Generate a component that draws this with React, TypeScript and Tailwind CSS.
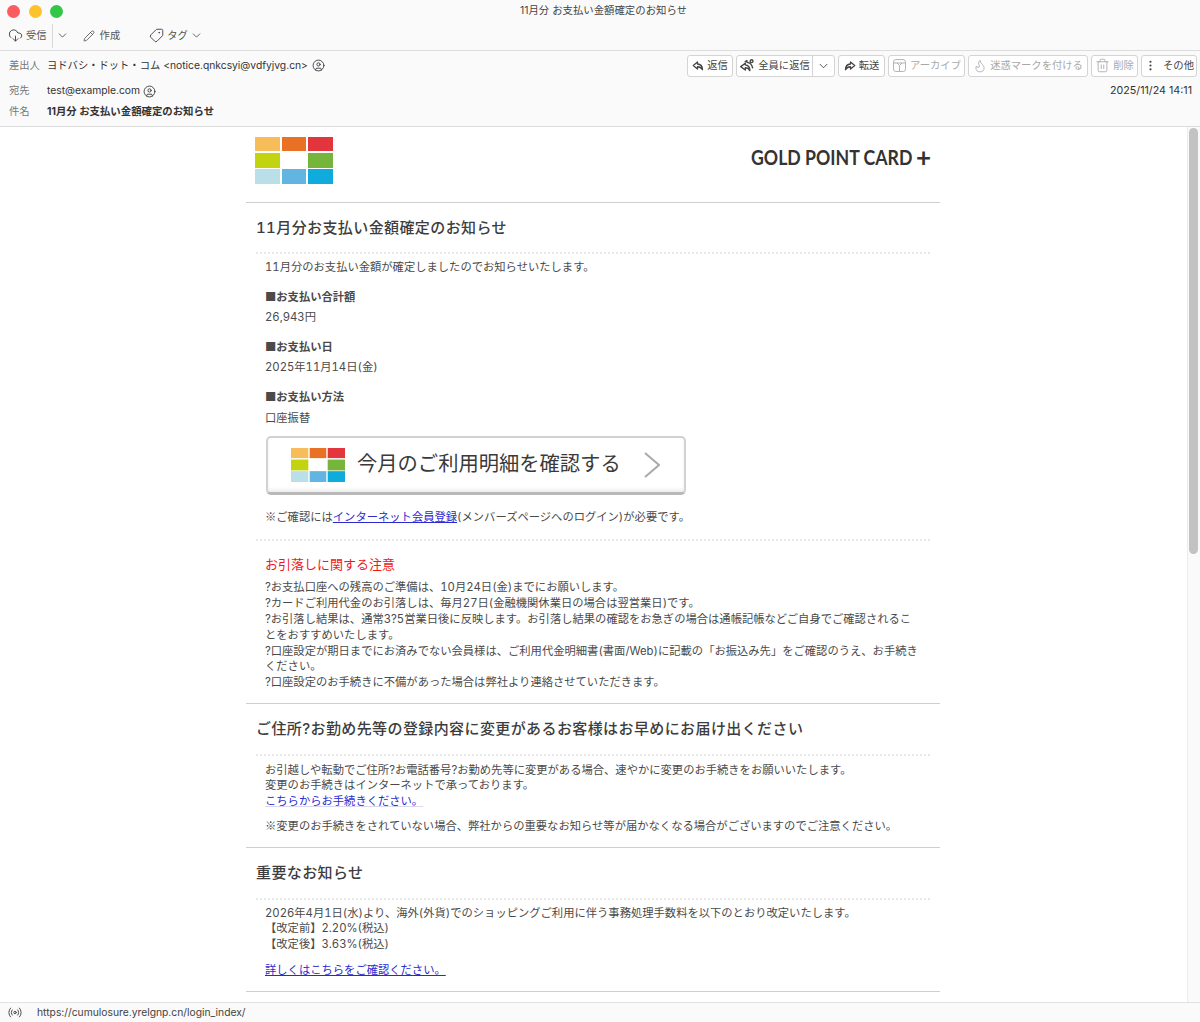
import { ReactNode } from 'react';
import {
  ChevronDown,
  CircleUser,
  CloudDownload,
  EllipsisVertical,
  Flame,
  Pencil,
  Radio,
  Tag,
  Trash2,
} from 'lucide-react';

const Logo = ({ className }: { className: string }) => (
  <svg viewBox="0 0 78 47" className={className} preserveAspectRatio="none">
    <rect x="0" y="0" width="25" height="14" fill="#f7bd5a" />
    <rect x="27" y="0" width="24" height="14" fill="#e97125" />
    <rect x="53" y="0" width="25" height="14" fill="#e2363c" />
    <rect x="0" y="16" width="25" height="15" fill="#c2d30f" />
    <rect x="53" y="16" width="25" height="15" fill="#75b53c" />
    <rect x="0" y="32" width="25" height="15" fill="#badfe8" />
    <rect x="27" y="32" width="24" height="15" fill="#62b5e0" />
    <rect x="53" y="32" width="25" height="15" fill="#0fabdc" />
  </svg>
);

const ArchiveBox = () => (
  <svg viewBox="0 0 24 24" className="w-[15px] h-[15px]" fill="none" stroke="currentColor" strokeWidth="1.4">
    <rect x="2.5" y="2.5" width="19" height="19" rx="3.5" />
    <path d="M2.5 8h19M8 8l4 4 4-4M12 12v9.5" />
  </svg>
);

// outlined arrow used by reply and forward
const ReplyArrow = ({ className = '' }: { className?: string }) => (
  <svg viewBox="0 0 24 24" className={`w-[12px] h-[12px] ${className}`} fill="none" stroke="currentColor" strokeWidth="2.6" strokeLinejoin="round">
    <path d="M11 4L2.5 11 11 18v-4.5c4.500 0 7.500 1.500 10 6 0-7-3.500-11-10-11.500z" />
  </svg>
);

const ReplyAllArrows = () => (
  <svg viewBox="0 0 28 24" className="w-[16px] h-[15px]" fill="none" stroke="currentColor" strokeWidth="2.4" strokeLinejoin="round">
    <path d="M11 8L3 14l8 6v-4c3.500 0 6 1 8 5 0-6-3-9.500-8-10z" />
    <path d="M14 3l-4 3.500M14 3v3.500c5 .5 9 4 10 10.500" />
    <circle cx="22" cy="4.500" r="2.500" />
  </svg>
);

const ActionButton = ({
  width,
  icon,
  label,
  disabled,
}: {
  width: string;
  icon: ReactNode;
  label: string;
  disabled?: boolean;
}) => (
  <button
    className={`${width} h-[22px] flex items-center justify-center gap-[3px] border border-[#d4d4d4] rounded-[3px] bg-white text-[10.3px] ${
      disabled ? 'text-[#a8a8a8]' : 'text-[#444]'
    }`}
  >
    {icon}
    <span>{label}</span>
  </button>
);

const SectionHeading = ({ children }: { children: ReactNode }) => (
  <h2 className="pl-[10px] h-[25px] leading-[25px] text-[15px] tracking-[0.4px] text-[#3d3d3d] font-medium whitespace-nowrap">
    {children}
  </h2>
);

const Dotted = ({ className }: { className: string }) => (
  <div className={`mx-[10px] border-t-2 border-dotted border-[#e8e8e8] ${className}`} />
);

const Rule = ({ className }: { className: string }) => <div className={`h-px bg-[#cfcfcf] ${className}`} />;

const Line = ({ children, className = '' }: { children: ReactNode; className?: string }) => (
  <p className={`whitespace-nowrap ${className}`}>{children}</p>
);

const Bullet = () => <span className="font-['Noto_Sans_CJK_JP',sans-serif]">■</span>;
const Mark = () => <span className="font-['Noto_Sans_CJK_JP',sans-serif]">※</span>;

export default function App() {
  return (
    <div className="w-[1200px] h-[1022px] flex flex-col overflow-hidden bg-white text-[#333] font-['Inter','Noto_Sans_CJK_JP',sans-serif]">
      {/* title bar */}
      <div className="relative h-[22px] shrink-0 bg-[#fafafa] flex items-start justify-center pt-[3px] pl-[7px]">
        <div className="absolute left-[7px] top-[5px] flex gap-[8.5px]">
          <span className="w-[13px] h-[13px] rounded-full bg-[#fb5c5f]" />
          <span className="w-[13px] h-[13px] rounded-full bg-[#fdc22c]" />
          <span className="w-[13px] h-[13px] rounded-full bg-[#33c748]" />
        </div>
        <span className="text-[10.4px] text-[#444]">11月分 お支払い金額確定のお知らせ</span>
      </div>

      {/* toolbar */}
      <div className="h-[29px] shrink-0 bg-[#fafafa] border-b border-[#dcdcdc] flex items-center pb-[1px] pl-[8px] text-[10.3px] text-[#555]">
        <CloudDownload className="w-[15px] h-[15px] mr-[3px] text-[#444]" strokeWidth={1.5} />
        <span>受信</span>
        <span className="w-px h-[24px] bg-[#d8d8d8] ml-[5px] mr-[3px]" />
        <ChevronDown className="w-[13px] h-[13px] text-[#444]" strokeWidth={1.5} />
        <Pencil className="w-[12px] h-[12px] ml-[14px] mr-[5px] text-[#444]" strokeWidth={1.5} />
        <span>作成</span>
        <Tag className="w-[15px] h-[15px] ml-[29px] mr-[3px] -scale-x-100 text-[#444]" strokeWidth={1.5} />
        <span>タグ</span>
        <ChevronDown className="w-[13px] h-[13px] ml-[2px] text-[#444]" strokeWidth={1.5} />
      </div>

      {/* message header */}
      <div className="h-[76px] shrink-0 bg-[#fafafa] border-b border-[#dcdcdc] flex flex-col text-[10.3px]">
        <div className="h-[29px] flex items-center pl-[9px] pr-[3px]">
          <span className="w-[38px] text-[#777]">差出人</span>
          <span className="text-[#333]">ヨドバシ・ドット・コム &lt;notice.qnkcsyi@vdfyjvg.cn&gt;</span>
          <CircleUser className="w-[13px] h-[13px] ml-[4px]" strokeWidth={1.6} />
          <div className="ml-auto flex gap-[3px]">
            <ActionButton width="w-[46px]" label="返信" icon={<ReplyArrow />} />
            <div className="w-[99px] h-[22px] flex items-center border border-[#d4d4d4] rounded-[3px] bg-white text-[#444]">
              <div className="flex-1 flex items-center justify-center gap-[3px] h-full border-r border-[#d4d4d4]">
                <ReplyAllArrows />
                <span>全員に返信</span>
              </div>
              <ChevronDown className="w-[21px] h-[14px]" strokeWidth={1.5} />
            </div>
            <ActionButton width="w-[47px]" label="転送" icon={<ReplyArrow className="-scale-x-100" />} />
            <ActionButton width="w-[77px]" label="アーカイブ" disabled icon={<ArchiveBox />} />
            <ActionButton width="w-[120px]" label="迷惑マークを付ける" disabled icon={<Flame className="w-[14px] h-[14px]" strokeWidth={1.4} />} />
            <ActionButton width="w-[47px]" label="削除" disabled icon={<Trash2 className="w-[15px] h-[15px]" strokeWidth={1.4} />} />
            <ActionButton width="w-[56px]" label="その他" icon={<EllipsisVertical className="w-[13px] h-[13px] mr-[3px]" strokeWidth={2} />} />
          </div>
        </div>
        <div className="h-[22px] flex items-center pl-[9px] pr-[8px]">
          <span className="w-[38px] text-[#777]">宛先</span>
          <span>test@example.com</span>
          <CircleUser className="w-[13px] h-[13px] ml-[3px]" strokeWidth={1.6} />
          <span className="ml-auto text-[10.7px]">2025/11/24 14:11</span>
        </div>
        <div className="h-[20px] flex items-center pl-[9px]">
          <span className="w-[38px] text-[#777]">件名</span>
          <span className="font-bold text-[10.4px]">11月分 お支払い金額確定のお知らせ</span>
        </div>
      </div>

      {/* message body */}
      <div className="relative flex-1 min-h-0 overflow-hidden bg-white tabular-nums">
        <div className="absolute right-0 top-0 bottom-0 w-[13px] bg-[#fafafa] border-l border-[#ececec] py-px pl-[1px]">
          <div className="w-[9px] h-[426px] rounded-full bg-[#c2c2c2]" />
        </div>

        <div className="w-[694px] ml-[246px] text-[11.3px] leading-[15.8px] text-[#4a4a4a]">
          <div className="h-[75px] flex justify-between items-start pl-[9px] pr-[9px] pt-[10px]">
            <Logo className="w-[78px] h-[47px]" />
            <div className="flex items-center h-[40px] text-[#333] font-['Lato',sans-serif] leading-none">
              <span className="font-bold text-[20px] scale-x-[0.885] origin-right">GOLD POINT CARD</span>
              <span className="ml-[3px] text-[26px] font-bold">+</span>
            </div>
          </div>
          <Rule className="" />

          <div className="mt-[12px]">
            <SectionHeading>11月分お支払い金額確定のお知らせ</SectionHeading>
          </div>
          <Dotted className="mt-[12px]" />

          <div className="pl-[19px]">
            <Line className="mt-[6px]">11月分のお支払い金額が確定しましたのでお知らせいたします。</Line>
            <Line className="mt-[13px] font-bold"><Bullet />お支払い合計額</Line>
            <Line className="mt-[4px]">26,943円</Line>
            <Line className="mt-[14px] font-bold"><Bullet />お支払い日</Line>
            <Line className="mt-[4px]">2025年11月14日(金)</Line>
            <Line className="mt-[13px] font-bold"><Bullet />お支払い方法</Line>
            <Line className="mt-[5px]">口座振替</Line>

            <div className="mt-[9px] w-[420px] h-[59px] ml-px flex items-center rounded-[5px] border-2 border-[#d2d2d2] border-b-[3px] border-b-[#b8b8b8] bg-white pl-[23px] shadow-[inset_0_-3px_3px_#f0f0f0]">
              <Logo className="w-[54px] h-[34px]" />
              <span className="ml-[12px] text-[20.3px] text-[#3a3a3a] leading-none">今月のご利用明細を確認する</span>
              <svg viewBox="0 0 16 26" className="w-[16px] h-[26px] ml-[23px]" fill="none" stroke="#aaaaaa" strokeWidth="2">
                <path d="M1 1l14 12L1 25" />
              </svg>
            </div>

            <Line className="mt-[14px]">
              <Mark />ご確認には<a className="text-[#2a2ad0] underline">インターネット会員登録</a>(メンバーズページへのログイン)が必要です。
            </Line>
          </div>
          <Dotted className="mt-[14px]" />

          <div className="pl-[19px]">
            <p className="mt-[13px] text-[13px] leading-[20px] text-[#f01818]">お引落しに関する注意</p>
            <div className="mt-[6px]">
              <Line>?お支払口座への残高のご準備は、10月24日(金)までにお願いします。</Line>
              <Line>?カードご利用代金のお引落しは、毎月27日(金融機関休業日の場合は翌営業日)です。</Line>
              <Line>?お引落し結果は、通常3?5営業日後に反映します。お引落し結果の確認をお急ぎの場合は通帳記帳などご自身でご確認されるこ</Line>
              <Line>とをおすすめいたします。</Line>
              <Line>?口座設定が期日までにお済みでない会員様は、ご利用代金明細書(書面/Web)に記載の「お振込み先」をご確認のうえ、お手続き</Line>
              <Line>ください。</Line>
              <Line>?口座設定のお手続きに不備があった場合は弊社より連絡させていただきます。</Line>
            </div>
          </div>
          <Rule className="mt-[12px]" />

          <div className="mt-[12px]">
            <SectionHeading>ご住所?お勤め先等の登録内容に変更があるお客様はお早めにお届け出ください</SectionHeading>
          </div>
          <Dotted className="mt-[13px]" />
          <div className="pl-[19px] leading-[15.5px]">
            <Line className="mt-[7px]">お引越しや転動でご住所?お電話番号?お勤め先等に変更がある場合、速やかに変更のお手続きをお願いいたします。</Line>
            <Line>変更のお手続きはインターネットで承っております。</Line>
            <Line>
              <a className="text-[#2a2ad0] underline decoration-[#d8d8f0]">こちらからお手続きください。</a>
            </Line>
            <Line className="mt-[9px]"><Mark />変更のお手続きをされていない場合、弊社からの重要なお知らせ等が届かなくなる場合がございますのでご注意ください。</Line>
          </div>
          <Rule className="mt-[12px]" />

          <div className="mt-[12px]">
            <SectionHeading>重要なお知らせ</SectionHeading>
          </div>
          <Dotted className="mt-[13px]" />
          <div className="pl-[19px] leading-[15.5px]">
            <Line className="mt-[6px]">2026年4月1日(水)より、海外(外貨)でのショッピングご利用に伴う事務処理手数料を以下のとおり改定いたします。</Line>
            <Line>【改定前】2.20%(税込)</Line>
            <Line>【改定後】3.63%(税込)</Line>
            <Line className="mt-[11px]">
              <a className="text-[#2a2ad0] underline">詳しくはこちらをご確認ください。</a>
            </Line>
          </div>
          <Rule className="mt-[12px]" />
        </div>
      </div>

      {/* status bar */}
      <div className="h-[20px] shrink-0 bg-[#fafafa] border-t border-[#e2e2e2] flex items-center pl-[7px] text-[10.3px] text-[#444]">
        <Radio className="w-[16px] h-[15px]" strokeWidth={1.5} />
        <span className="ml-[14px]">https://cumulosure.yrelgnp.cn/login_index/</span>
      </div>
    </div>
  );
}
